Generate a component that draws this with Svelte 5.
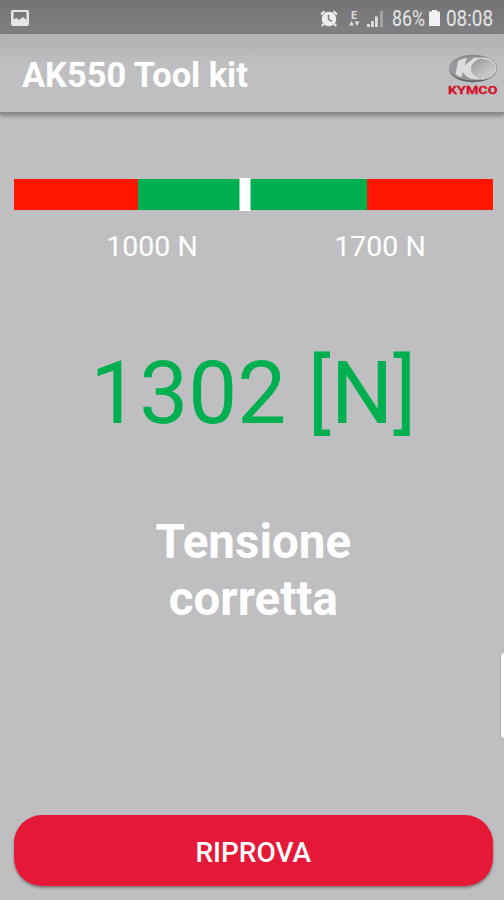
<script>
  let min = 1000
  let max = 1700
  let force = 1302
  let unit = "N"

  // the green zone takes the middle part of the bar
  let low = 26
  let high = 73.8

  $: in_range = force >= min && force <= max
  $: marker = low + ((force - min) / (max - min)) * (high - low) + 1.7
</script>

<div class="screen">

  <div class="status-bar">
    <svg class="picture" viewBox="0 0 18 16" width="18" height="16">
      <path fill="#e6e6e6" fill-rule="evenodd" d="M2 0h14q2 0 2 2v12q0 2-2 2H2q-2 0-2-2V2q0-2 2-2zM2.500 2v7.500l3-1.500 2.500 2 4-3 3.500 3V2z" />
    </svg>

    <svg class="alarm" viewBox="0 0 18 17" width="18" height="17">
      <circle cx="9" cy="9" r="7.300" fill="#ececec" />
      <path d="M1 4.500L4.500 1.200M17 4.500L13.500 1.200M3.500 14L1.800 16M14.500 14l1.700 2" stroke="#ececec" stroke-width="2" />
      <path d="M8.500 4.800v4.500l3.600 2" fill="none" stroke="#7c7c7e" stroke-width="1.500" />
    </svg>
    <svg class="edge" viewBox="0 0 12 18" width="12" height="18">
      <text x="3" y="9.500" font-size="11" font-weight="bold" fill="#dcdcdc">E</text>
      <path fill="#dcdcdc" d="M1 16.500l2.500-4.500L6 16.500zM6.500 12.500h5L9 17z" />
    </svg>
    <svg class="signal" viewBox="0 0 18 17" width="18" height="17">
      <path fill="#ddd" d="M1 14h2.800v3H1zM5 11h2.800v6H5zM9 6.500h2.800V17H9z" />
      <path fill="#a2a2a4" d="M14 1h3v16h-3z" />
    </svg>
    <div class="percent"><span>86%</span></div>
    <svg class="battery" viewBox="0 0 11 16" width="11" height="16">
      <path fill="#f1f1f1" d="M3 0h5v1.500h3V16H0V1.500h3z" />
    </svg>
    <div class="clock"><span>08:08</span></div>
  </div>

  <header>
    <h1>AK550 Tool kit</h1>
    <svg class="logo" viewBox="0 0 52 44" width="52" height="44">
      <defs>
        <linearGradient id="metal" x1="0" y1="0" x2="1" y2="1">
          <stop offset="0" stop-color="#8b8c8f" />
          <stop offset="0.500" stop-color="#b4b5b7" />
          <stop offset="1" stop-color="#d5d5d6" />
        </linearGradient>
        <linearGradient id="rim" x1="0" y1="0" x2="0" y2="1">
          <stop offset="0" stop-color="#85868a" />
          <stop offset="0.500" stop-color="#a4a5a8" />
          <stop offset="1" stop-color="#5b5c60" />
        </linearGradient>
      </defs>
      <ellipse cx="26" cy="15.500" rx="23.500" ry="12.800" fill="#96979a" stroke="url(#rim)" stroke-width="1.800" />
      <ellipse cx="33.500" cy="15.500" rx="14" ry="10" fill="url(#metal)" />
      <path fill="#dcdcdd" d="M11 8q4-2.500 9-3l-2.500 7.500L27 4.800h8c-7 2.500-11 6.200-11 10.700 0 4.800 3.500 8.500 10 10.800-9 1-15.500-1.800-17.800-7.300L14 24.500q-3-1-5.500-3.500z" />
      <path d="M34 5c8 0 14.500 4.500 14.500 10.500S42 26 34 26" fill="none" stroke="#dededf" stroke-width="1.300" />
      <text x="1" y="40.500" font-size="10.500" font-weight="700" fill="#d5132b" stroke="#d5132b" stroke-width="0.300" textLength="49.500" lengthAdjust="spacingAndGlyphs">KYMCO</text>
    </svg>
  </header>

  <main>
    <div class="gauge">
      <div class="bad" style="width: {low}%"></div>
      <div class="good"></div>
      <div class="bad" style="width: {100 - high}%"></div>
      <div class="marker" style="left: {marker}%"></div>
    </div>

    <div class="labels">
      <span>{min} {unit}</span>
      <span>{max} {unit}</span>
    </div>

    <div class="value" class:wrong={!in_range}>{force} [{unit}]</div>

    <p class="message">Tensione<br />{in_range ? "corretta" : "errata"}</p>

    <button>RIPROVA</button>
  </main>

  <div class="edge-handle"></div>
</div>


<style>

  :global(body) {
    background-color: #bfbfc1;
  }

  .screen {
    position: relative;
    display: flex;
    flex-direction: column;
    width: 504px;
    height: 900px;
    overflow: hidden;
    background-color: #bfbfc1;
    font-family: Roboto, sans-serif;
    color: white;
  }

  .status-bar {
    display: flex;
    align-items: center;
    box-sizing: border-box;
    height: 34px;
    padding: 2px 11px 0 11px;
    background: linear-gradient(#747476, #808082);
  }

  .picture {
    margin-right: auto;
  }

  .alarm {
    margin-right: 10px;
  }

  .edge {
    margin-right: 6px;
  }

  .signal {
    margin-right: 8px;
  }

  .percent,
  .clock {
    font-size: 22.5px;
    line-height: 28px;
    color: #e6e6e6;
  }

  .percent {
    width: 34px;
    margin-right: 3px;
  }

  .clock {
    width: 47px;
  }

  /* condensed digits */
  .percent span,
  .clock span {
    display: inline-block;
    transform: scaleX(0.79);
    transform-origin: left;
  }

  .clock span {
    transform: scaleX(0.84);
  }

  .battery {
    margin-right: 6px;
  }

  header {
    display: flex;
    align-items: center;
    justify-content: space-between;
    box-sizing: border-box;
    height: 80px;
    padding: 4px 5px 0 22px;
    background: linear-gradient(#b1b1b3, #bfbfc1 40%);
    border-bottom: 2px solid #8a8a8c;
    box-shadow: 0 2px 4px rgba(0, 0, 0, 0.3);
  }

  h1 {
    margin: 0;
    font-size: 34.4px;
    font-weight: 700;
    line-height: 40px;
  }

  main {
    display: flex;
    flex: 1;
    flex-direction: column;
    padding: 65px 11.5px 14px 14px;
  }

  .gauge {
    position: relative;
    display: flex;
    height: 31px;
  }

  .bad {
    background-color: #ff1600;
  }

  .good {
    flex: 1;
    background-color: #00b050;
  }

  .marker {
    position: absolute;
    top: -1px;
    bottom: -1px;
    width: 11px;
    transform: translateX(-50%);
    background-color: white;
  }

  .labels {
    display: flex;
    margin-top: 20px;
    margin-left: 24px;
    font-size: 28.5px;
    line-height: 34px;
  }

  .labels span {
    flex: none;
    width: 228px;
    text-align: center;
  }

  .value {
    margin-top: 77px;
    text-align: center;
    font-size: 87.2px;
    line-height: 104px;
    color: #00b050;
  }

  .wrong {
    color: #ff1600;
  }

  .message {
    margin: 69px 0 0;
    text-align: center;
    font-size: 47.5px;
    font-weight: 700;
    line-height: 57px;
  }

  button {
    height: 71px;
    margin-top: auto;
    padding: 3px 0 0;
    border: none;
    border-radius: 28px;
    background-color: #e51937;
    box-shadow: 0 2px 3px rgba(0, 0, 0, 0.35);
    font-family: inherit;
    font-size: 28px;
    font-weight: 500;
    color: white;
    cursor: pointer;
  }

  .edge-handle {
    position: absolute;
    top: 653px;
    right: 0;
    width: 3px;
    height: 85px;
    border-radius: 3px 0 0 3px;
    background-color: white;
    box-shadow: 0 0 2px rgba(0, 0, 0, 0.3);
  }

</style>
